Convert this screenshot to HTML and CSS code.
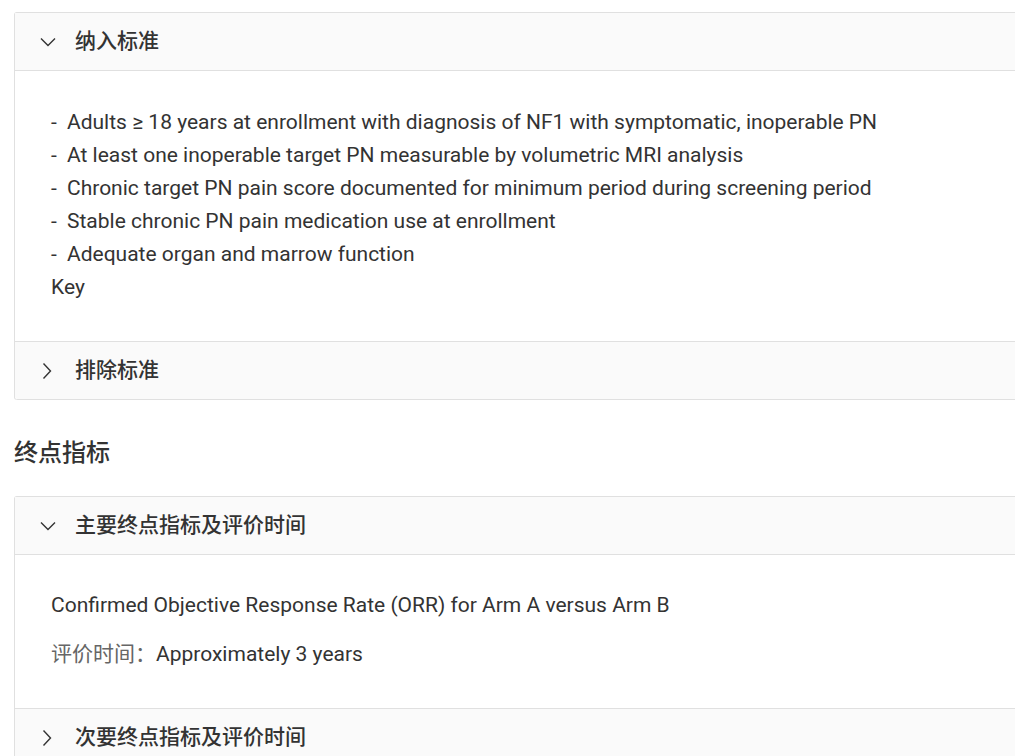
FILE: index.html
```html
<!DOCTYPE html>
<html lang="zh-CN">
<head>
    <meta charset="UTF-8">
    <title>试验详情</title>
    <link rel="stylesheet" href="styles.css">
</head>
<body>
    <div class="page">
        <div class="collapse">
            <div class="item">
                <div class="item-header">
                    <svg class="arrow" width="16" height="16" viewBox="0 0 16 16"><path d="M1 4.5 L8 11.5 L15 4.5" /></svg>
                    <span class="item-title">纳入标准</span>
                </div>
                <div class="item-content">
                    <ul class="dash-list">
                        <li><span class="dash">-</span>Adults ≥ 18 years at enrollment with diagnosis of NF1 with symptomatic, inoperable PN</li>
                        <li><span class="dash">-</span>At least one inoperable target PN measurable by volumetric MRI analysis</li>
                        <li><span class="dash">-</span>Chronic target PN pain score documented for minimum period during screening period</li>
                        <li><span class="dash">-</span>Stable chronic PN pain medication use at enrollment</li>
                        <li><span class="dash">-</span>Adequate organ and marrow function</li>
                        <li>Key</li>
                    </ul>
                </div>
            </div>
            <div class="item">
                <div class="item-header">
                    <svg class="arrow" width="16" height="16" viewBox="0 0 16 16"><path d="M3.5 0.5 L10.5 8 L3.5 15.5" /></svg>
                    <span class="item-title">排除标准</span>
                </div>
            </div>
        </div>

        <h2 class="section-title">终点指标</h2>

        <div class="collapse">
            <div class="item">
                <div class="item-header">
                    <svg class="arrow" width="16" height="16" viewBox="0 0 16 16"><path d="M1 4.5 L8 11.5 L15 4.5" /></svg>
                    <span class="item-title">主要终点指标及评价时间</span>
                </div>
                <div class="item-content">
                    <p class="endpoint">Confirmed Objective Response Rate (ORR) for Arm A versus Arm B</p>
                    <p class="endpoint"><span class="label">评价时间：</span>Approximately 3 years</p>
                </div>
            </div>
            <div class="item">
                <div class="item-header">
                    <svg class="arrow" width="16" height="16" viewBox="0 0 16 16"><path d="M3.5 0.5 L10.5 8 L3.5 15.5" /></svg>
                    <span class="item-title">次要终点指标及评价时间</span>
                </div>
            </div>
        </div>
    </div>
</body>
</html>
```

FILE: styles.css
```css
* {
    margin: 0;
    padding: 0;
    box-sizing: border-box;
}
body {
    font-family: Roboto, "Noto Sans CJK SC", sans-serif;
    background: #fff;
    color: #333;
    overflow: hidden;
}
.page {
    width: 1040px;
    padding: 12px 0 0 14px;
}
.collapse {
    border: 1px solid #e0e0e0;
    border-bottom: 0;
    border-radius: 3px;
    background: #fff;
}
.item {
    border-bottom: 1px solid #e0e0e0;
}
.item:last-child {
    border-radius: 0 0 3px 3px;
}
.item-header {
    height: 57px;
    display: flex;
    align-items: center;
    padding-left: 25px;
    background: #fafafa;
}
.item:last-child .item-header {
    border-radius: 0 0 3px 3px;
}
.arrow {
    flex: none;
    margin-right: 19px;
}
.arrow path {
    fill: none;
    stroke: #333;
    stroke-width: 1.4;
}
.item-title {
    font-size: 21px;
    font-weight: 500;
    line-height: 30px;
    margin-top: -2px;
    color: #333;
}
.item-content {
    border-top: 1px solid #e0e0e0;
    padding: 35px 36px 37px 36px;
    font-size: 21px;
    line-height: 33px;
    color: #333;
}
.dash-list {
    list-style: none;
}
.dash {
    display: inline-block;
    width: 16px;
}
.section-title {
    font-size: 24px;
    font-weight: 500;
    line-height: 32px;
    margin: 37px 0 27px;
    color: #333;
}
.endpoint + .endpoint {
    margin-top: 16px;
}
.item-content:has(.endpoint) {
    padding-bottom: 37px;
    padding-top: 34px;
}
.label {
    color: #666;
}
```
